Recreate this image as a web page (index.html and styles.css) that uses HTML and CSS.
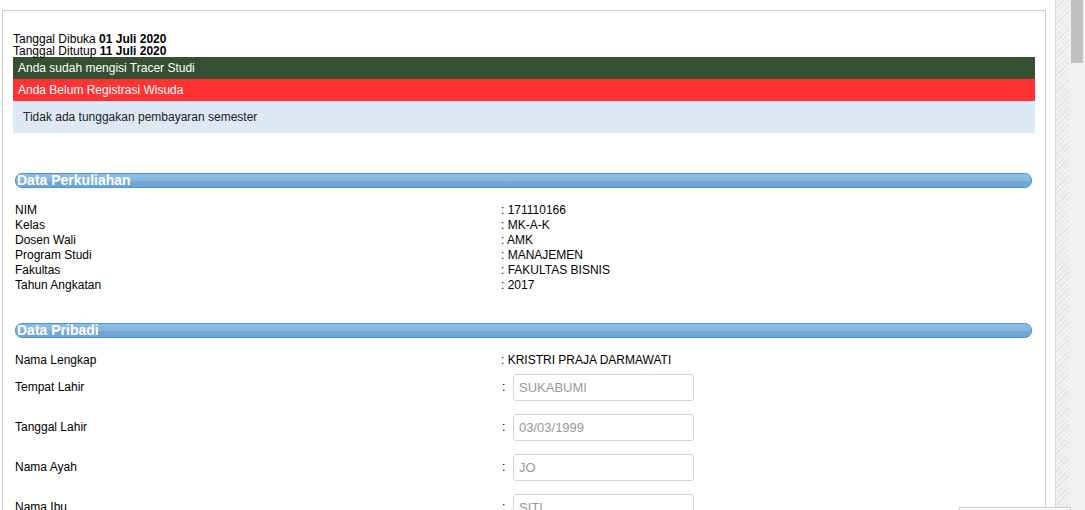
FILE: index.html
```html
<!DOCTYPE html>
<html>
<head>
<meta charset="utf-8">
<link rel="stylesheet" href="styles.css">
</head>
<body>
<div class="page">
  <div class="main">
    <div class="box">
      <div class="dates">
        <div>Tanggal Dibuka <b>01 Juli 2020</b></div>
        <div>Tanggal Ditutup <b>11 Juli 2020</b></div>
      </div>
      <div class="alert alert-green">Anda sudah mengisi Tracer Studi</div>
      <div class="alert alert-red">Anda Belum Registrasi Wisuda</div>
      <div class="alert alert-info">Tidak ada tunggakan pembayaran semester</div>

      <div class="section-head sh-1">Data Perkuliahan</div>
      <div class="data-list">
        <div class="lbl">NIM</div><div class="val">: 171110166</div>
        <div class="lbl">Kelas</div><div class="val">: MK-A-K</div>
        <div class="lbl">Dosen Wali</div><div class="val">: AMK</div>
        <div class="lbl">Program Studi</div><div class="val">: MANAJEMEN</div>
        <div class="lbl">Fakultas</div><div class="val">: FAKULTAS BISNIS</div>
        <div class="lbl">Tahun Angkatan</div><div class="val">: 2017</div>
      </div>

      <div class="section-head sh-2">Data Pribadi</div>
      <div class="form-list">
        <div class="frow frow-text">
          <div class="flbl">Nama Lengkap</div>
          <div class="fval">: KRISTRI PRAJA DARMAWATI</div>
        </div>
        <div class="frow">
          <div class="flbl">Tempat Lahir</div>
          <div class="colon">:</div>
          <input class="field" type="text" value="SUKABUMI" disabled>
        </div>
        <div class="frow">
          <div class="flbl">Tanggal Lahir</div>
          <div class="colon">:</div>
          <input class="field" type="text" value="03/03/1999" disabled>
        </div>
        <div class="frow">
          <div class="flbl">Nama Ayah</div>
          <div class="colon">:</div>
          <input class="field" type="text" value="JO" disabled>
        </div>
        <div class="frow">
          <div class="flbl">Nama Ibu</div>
          <div class="colon">:</div>
          <input class="field" type="text" value="SITI" disabled>
        </div>
      </div>
    </div>
  </div>
  <div class="strip"></div>
  <div class="scrollbar"><div class="thumb"></div></div>
</div>
<div class="float-box"></div>
</body>
</html>
```

FILE: styles.css
```css
html, body {
  margin: 0;
  padding: 0;
  height: 100%;
  overflow: hidden;
  background: #fff;
}
body {
  font-family: "Liberation Sans", Arial, sans-serif;
  font-size: 12px;
  color: #000;
}
.page {
  display: flex;
  height: 510px;
}
.main {
  width: 1054px;
  padding: 10px 0 0 2px;
}
.box {
  width: 1044px;
  height: 600px;
  border: 1px solid #cfcfcf;
  padding: 22px 10px 0 10px;
  box-sizing: border-box;
}
.dates {
  line-height: 12px;
  font-size: 12px;
}
.alert {
  color: #fff;
  font-size: 12px;
  height: 22px;
  line-height: 22px;
  padding-left: 5px;
}
.alert-green { background: #344f32; }
.alert-red { background: #ff3333; }
.alert-info {
  background: #dde9f5;
  color: #222;
  height: 32px;
  line-height: 32px;
  padding-left: 10px;
}
.section-head {
  margin: 40px 3px 0 2px;
  height: 13px;
  line-height: 13px;
  border: 1px solid #4b91d0;
  border-radius: 7px;
  background: linear-gradient(to bottom, #8fbce1 0%, #86b6de 50%, #72a8d8 58%, #6ea5d5 100%);
  color: #fff;
  font-weight: bold;
  font-size: 14px;
  padding-left: 1px;
  overflow: hidden;
  white-space: nowrap;
}
.sh-2 { margin-top: 30px; }
.data-list {
  display: grid;
  grid-template-columns: 486px 1fr;
  margin: 15px 0 0 2px;
  line-height: 15px;
}
.form-list {
  margin: 14px 0 0 2px;
}
.frow {
  display: flex;
  align-items: center;
  height: 26px;
  margin-bottom: 14px;
}
.frow-text {
  height: 15px;
  margin-bottom: 7px;
}
.flbl {
  width: 486px;
  flex: none;
}
.colon {
  width: 12px;
  padding-left: 1px;
  box-sizing: border-box;
  flex: none;
}
.field {
  width: 181px;
  height: 27px;
  box-sizing: border-box;
  border: 1px solid #d4d4d4;
  border-radius: 3px;
  background: #fff;
  font-family: "Liberation Sans", Arial, sans-serif;
  font-size: 13px;
  color: #999;
  padding: 0 5px;
  margin: 0;
}
.strip {
  width: 13px;
  flex: none;
  border-left: 1px solid #d6d6d6;
  background-color: #ededed;
  background-image:
    repeating-linear-gradient(45deg, rgba(255,255,255,0.5) 0 1px, transparent 1px 3px),
    repeating-linear-gradient(-45deg, rgba(210,210,210,0.5) 0 1px, transparent 1px 4px);
}
.scrollbar {
  width: 16px;
  flex: none;
  background: #f1f1f1;
  padding: 0 2px;
  box-sizing: border-box;
}
.thumb {
  height: 63px;
  background: #c1c1c1;
}
.float-box {
  position: absolute;
  left: 959px;
  top: 507px;
  width: 110px;
  height: 20px;
  border: 1px solid #cfcfcf;
  background: #fff;
}
```
